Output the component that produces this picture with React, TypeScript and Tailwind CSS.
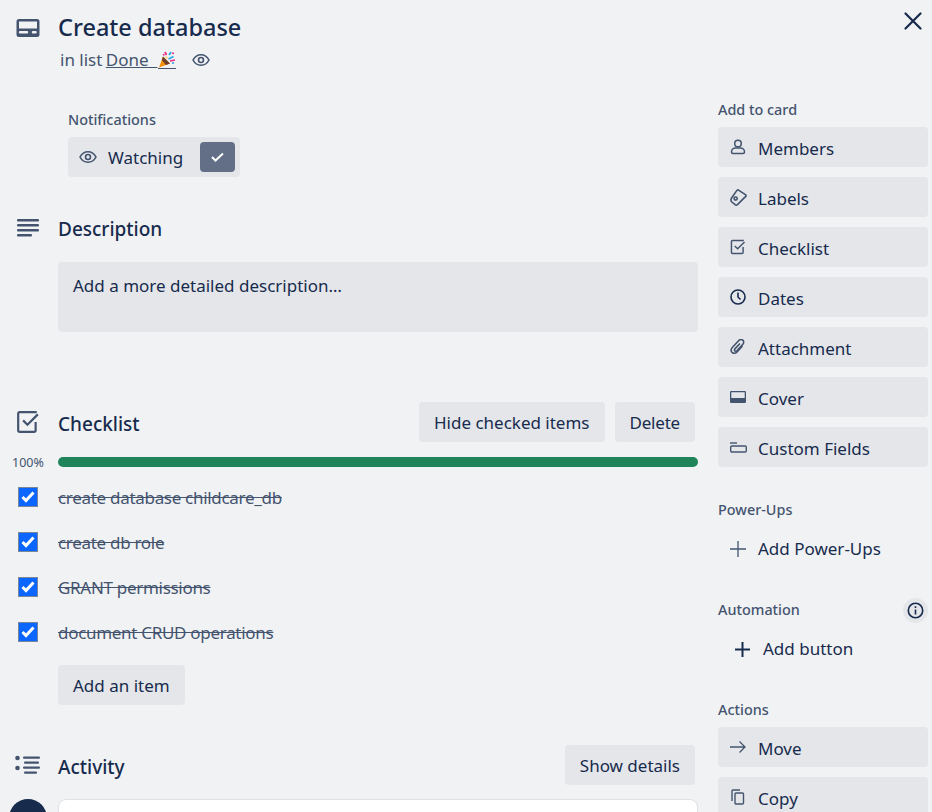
const font = { fontFamily: '"Noto Sans", sans-serif' };

function CardIcon() {
  return (
    <svg width="24" height="20" viewBox="0 0 24 20" fill="#44546f">
      <path fillRule="evenodd" d="M3 1h18a2.5 2.5 0 012.5 2.5v13A2.5 2.5 0 0121 19H3a2.5 2.5 0 01-2.5-2.5v-13A2.5 2.5 0 013 1zm0 2.5v7h18v-7H3zm1 9.5a1 1 0 000 2.5h7a1 1 0 000-2.5H4zm13 0a1.2 1.2 0 000 2.5h2.5a1.2 1.2 0 000-2.5H17z" />
    </svg>
  );
}

function EyeIcon() {
  return (
    <svg width="18" height="14" viewBox="0 0 18 14" fill="none" stroke="#44546f" strokeWidth="1.6">
      <path d="M1 7c1.8-3.4 4.6-5.3 8-5.3S15.200 3.600 17 7c-1.800 3.400-4.600 5.300-8 5.300S2.800 10.400 1 7z" />
      <circle cx="9" cy="7" r="2.500" />
    </svg>
  );
}

function PartyIcon() {
  return (
    <svg width="18" height="17" viewBox="0 0 18 17">
      <path d="M5 5.500L1 16.500l11-4z" fill="#f4900c" />
      <path d="M5 5.500l7 7-4 1.400L3.800 9z" fill="#6b3f2a" />
      <path d="M7 1l1.500 3M5.500 3l.5 1.500" stroke="#ea2f86" strokeWidth="1.800" />
      <path d="M11 4l2-3M10.500 8l5-2.500" stroke="#2aa8e8" strokeWidth="1.800" />
      <path d="M12 10l5-1M14 2l2 .5" stroke="#ea2f86" strokeWidth="1.500" />
      <circle cx="15" cy="12" r="1.100" fill="#2aa8e8" />
      <circle cx="8.500" cy="6.500" r="1.100" fill="#fdcb58" />
    </svg>
  );
}

function DescIcon() {
  return (
    <svg width="24" height="20" viewBox="0 0 24 20" fill="#44546f">
      <rect x="1" y="0" width="22" height="2.500" rx="1" />
      <rect x="1" y="5" width="22" height="2.500" rx="1" />
      <rect x="1" y="10" width="22" height="2.500" rx="1" />
      <rect x="1" y="15" width="15" height="2.500" rx="1" />
    </svg>
  );
}

function ChecklistIcon({ size = 24 }: { size?: number }) {
  return (
    <svg width={size} height={size} viewBox="0 0 22 22" fill="none" stroke="#44546f" strokeWidth="2">
      <path d="M18 11v7.500a1.500 1.500 0 01-1.500 1.500h-13A1.500 1.500 0 012 18.500v-15A1.500 1.500 0 013.500 2H19" />
      <path d="M6.500 9.500l4 4L20 4" />
    </svg>
  );
}

function ActivityIcon() {
  return (
    <svg className="-ml-[1px]" width="26" height="20" viewBox="0 0 26 20" fill="#44546f">
      <circle cx="2.500" cy="3" r="2.300" />
      <circle cx="2.500" cy="13" r="2.300" />
      <rect x="8" y="1.500" width="17" height="2.200" rx="1" />
      <rect x="9" y="6.500" width="15" height="2.200" rx="1" />
      <rect x="8" y="11.500" width="17" height="2.200" rx="1" />
      <rect x="9" y="16.500" width="13" height="2.200" rx="1" />
    </svg>
  );
}

const sideIcons: Record<string, React.ReactNode> = {
  Members: (
    <svg width="16" height="16" viewBox="0 0 16 16" fill="none" stroke="#44546f" strokeWidth="1.500">
      <circle cx="8" cy="4.500" r="3.300" />
      <path d="M1.500 13c0-2.500 2-4 4-4h5c2 0 4 1.500 4 4 0 1-.5 1.500-1.500 1.500H3c-1 0-1.500-.5-1.500-1.500z" />
    </svg>
  ),
  Labels: (
    <svg width="17" height="17" viewBox="0 0 16 16" fill="none" stroke="#44546f" strokeWidth="1.500" strokeLinejoin="round">
      <path d="M8 1l6.500 4.300q1 .8.300 1.700L7 14.700q-1 .8-2.200.1L1.500 12q-1.200-1.500 0-3.500L6 2q1-1.500 2-1z" />
      <circle cx="5.300" cy="9" r="1.500" />
    </svg>
  ),
  Checklist: <ChecklistIcon size={16} />,
  Dates: (
    <svg width="16" height="16" viewBox="0 0 16 16" fill="none" stroke="#172b4d" strokeWidth="1.600">
      <circle cx="8" cy="8" r="7" />
      <path d="M8 3.500V8l2.500 2.500" />
    </svg>
  ),
  Attachment: (
    <svg width="16" height="16" viewBox="0 0 16 16" fill="none" stroke="#44546f" strokeWidth="1.600">
      <path d="M12.500 7l-5.500 6c-1.500 1.500-3.500 1.500-5 .3-1.200-1.300-1-3.300.3-4.800l6.500-7c1-1.100 2.800-1.300 4-.3 1.100 1 1.200 2.800.1 4l-6 6.500c-.6.600-1.400.7-2 .2-.6-.6-.5-1.400 0-2L10 4.500" />
    </svg>
  ),
  Cover: (
    <svg width="16" height="14" viewBox="0 0 16 14" fill="#44546f">
      <path fillRule="evenodd" d="M1.500 1h13A1.300 1.300 0 0116 2.300v9.400a1.300 1.300 0 01-1.300 1.300H1.300A1.300 1.300 0 010 11.700V2.300A1.300 1.300 0 011.500 1zm-.2 1.300v5.700h13.400V2.300H1.300z" />
    </svg>
  ),
  "Custom Fields": (
    <svg width="17" height="11" viewBox="0 0 17 11" fill="none" stroke="#44546f" strokeWidth="1.400">
      <path d="M0 1h7" />
      <rect x=".7" y="4" width="15.600" height="6" rx="1.200" />
    </svg>
  ),
  Move: (
    <svg width="16" height="14" viewBox="0 0 16 14" fill="none" stroke="#44546f" strokeWidth="1.300">
      <path d="M0 7h15M9.500 1.500L15 7l-5.500 5.500" />
    </svg>
  ),
  Copy: (
    <svg width="14" height="16" viewBox="0 0 14 16" fill="none" stroke="#44546f" strokeWidth="1.400">
      <path d="M1 12V2a1 1 0 011-1h7" />
      <rect x="4" y="4" width="8.500" height="11" rx="1" />
    </svg>
  ),
};

function SideButton({ label }: { label: string }) {
  return (
    <div className="flex h-10 items-center rounded-[4px] bg-[#e4e6ea] text-[17px] text-[#172b4d]">
      <span className="flex w-10 shrink-0 items-center justify-center">{sideIcons[label]}</span>
      <span className="pt-[3px]">{label}</span>
    </div>
  );
}

function SideLabel({ children }: { children: React.ReactNode }) {
  return <div className="flex h-5 items-center text-[14.400px] font-medium text-[#44546f]">{children}</div>;
}

function SectionTitle({ icon, title, right, drop }: { icon: React.ReactNode; title: string; right?: React.ReactNode; drop?: boolean }) {
  return (
    <div className="flex h-10 items-center">
      <span className="flex w-[58px] shrink-0 items-center pl-4">{icon}</span>
      <h3 className={drop ? "flex-1 pt-[4px] text-[19px] font-medium text-[#172b4d]" : "flex-1 text-[19px] font-medium text-[#172b4d]"}>{title}</h3>
      {right}
    </div>
  );
}

function Btn({ children }: { children: React.ReactNode }) {
  return (
    <div className="flex h-10 items-center rounded-[4px] bg-[#e4e6ea] px-[15px] pt-[2px] text-[17px] text-[#172b4d]">
      {children}
    </div>
  );
}

function CheckItem({ text }: { text: string }) {
  return (
    <div className="flex h-[45px] items-center">
      <span className="ml-[18px] -mt-[3px] flex h-5 w-5 items-center justify-center border border-[#7a869a] bg-[#0b66ff]">
        <svg width="14" height="12" viewBox="0 0 14 12" fill="none" stroke="#fff" strokeWidth="3">
          <path d="M1.500 6l3.500 3.500L12.500 1.500" />
        </svg>
      </span>
      <span className="ml-5 pb-[1px] text-[17px] tracking-[-0.3px] text-[#44546f] line-through">{text}</span>
    </div>
  );
}

export default function App() {
  return (
    <div className="flex h-[812px] w-[932px] overflow-hidden bg-[#f1f2f4]" style={font}>
      <main className="w-[698px] shrink-0">
        <div className="mt-2 flex h-10 items-center">
          <span className="flex w-[58px] shrink-0 pl-4">
            <CardIcon />
          </span>
          <h1 className="text-[23.500px] font-medium text-[#172b4d]">Create database</h1>
        </div>
        <div className="ml-[60px] flex h-6 items-center text-[17px] text-[#44546f]">
          <span>in list&nbsp;</span>
          <span className="-ml-[1px] flex items-center underline">
            Done&nbsp;&nbsp;
            <span className="ml-[1px] border-b border-[#44546f]"><PartyIcon /></span>
          </span>
          <span className="ml-[16px]"><EyeIcon /></span>
        </div>

        <div className="mt-[38px] ml-[68px]">
          <div className="flex h-5 items-center text-[14.400px] font-medium text-[#44546f]">Notifications</div>
          <div className="mt-[7px] flex h-10 w-[172px] items-center rounded-[4px] bg-[#e4e6ea] text-[17px] text-[#172b4d]">
            <span className="ml-[11px]"><EyeIcon /></span>
            <span className="ml-[11px] pt-[2px]">Watching</span>
            <span className="ml-auto mr-[5px] flex h-[30px] w-[35px] items-center justify-center rounded-[4px] bg-[#626f86]">
              <svg width="13" height="10" viewBox="0 0 13 10" fill="none" stroke="#fff" strokeWidth="2">
                <path d="M1 5l3.500 3.500L12 1.500" />
              </svg>
            </span>
          </div>
        </div>

        <div className="mt-[32px]">
          <SectionTitle icon={<DescIcon />} title="Description" />
        </div>
        <div className="ml-[58px] mt-[13px] h-[70px] rounded-[4px] bg-[#e4e6ea] px-[15px] py-[10px] text-[17px] leading-[28px] text-[#172b4d]">
          Add a more detailed description…
        </div>

        <div className="mt-[70px]">
          <SectionTitle
            drop
            icon={<ChecklistIcon />}
            title="Checklist"
            right={
              <div className="mr-[3px] flex gap-[10px]">
                <Btn>Hide checked items</Btn>
                <Btn><span className="tracking-[-0.2px]">Delete</span></Btn>
              </div>
            }
          />
        </div>
        <div className="mt-[15px] flex h-[10px] items-center">
          <span className="flex w-[58px] shrink-0 pl-3 pt-[2px] text-[12.500px] text-[#44546f]">100%</span>
          <div className="h-[10px] flex-1 rounded-[5px] bg-[#1f845a]" />
        </div>
        <div className="mt-[9px]">
          <CheckItem text="create database childcare_db" />
          <CheckItem text="create db role" />
          <CheckItem text="GRANT permissions" />
          <CheckItem text="document CRUD operations" />
        </div>
        <div className="ml-[58px] mt-[9px] flex">
          <Btn>Add an item</Btn>
        </div>

        <div className="mt-10">
          <SectionTitle drop icon={<ActivityIcon />} title="Activity" right={<div className="mr-[3px]"><Btn>Show details</Btn></div>} />
        </div>
        <div className="mt-[14px] flex">
          <span className="ml-[9px] h-[38px] w-[38px] shrink-0 rounded-full bg-[#172b4d]" />
          <div className="ml-[11px] h-10 flex-1 rounded-[8px] border border-[#dfe1e6] bg-white" />
        </div>
      </main>

      <aside className="ml-5 mt-[100px] w-[210px] shrink-0">
        <SideLabel>Add to card</SideLabel>
        <div className="mt-[7px] flex flex-col gap-[10px]">
          {["Members", "Labels", "Checklist", "Dates", "Attachment", "Cover", "Custom Fields"].map((l) => (
            <SideButton key={l} label={l} />
          ))}
        </div>

        <div className="mt-[33px]"><SideLabel>Power-Ups</SideLabel></div>
        <div className="mt-[9px] flex h-10 items-center text-[17px] text-[#172b4d]">
          <span className="flex w-10 shrink-0 items-center justify-center">
            <svg width="16" height="16" viewBox="0 0 16 16" stroke="#44546f" strokeWidth="1.300"><path d="M8 0v16M0 8h16" /></svg>
          </span>
          Add Power-Ups
        </div>

        <div className="mt-[31px] flex h-5 items-center justify-between">
          <span className="text-[14.400px] font-medium text-[#44546f]">Automation</span>
          <span className="flex h-[25px] w-[25px] items-center justify-center rounded-full bg-[#e4e6ea]">
            <svg width="17" height="17" viewBox="0 0 17 17" fill="none" stroke="#172b4d" strokeWidth="1.600">
              <circle cx="8.500" cy="8.500" r="7.200" />
              <path d="M8.500 7.500v5M8.500 4.200v1.800" />
            </svg>
          </span>
        </div>
        <div className="mt-[9px] flex h-10 items-center pl-[45px] text-[17px] text-[#172b4d]">
          <svg className="mr-[13px] -ml-[28px]" width="15" height="15" viewBox="0 0 15 15" stroke="#172b4d" strokeWidth="2"><path d="M7.500 0v15M0 7.500h15" /></svg>
          Add button
        </div>

        <div className="mt-[31px]"><SideLabel>Actions</SideLabel></div>
        <div className="mt-[7px] flex flex-col gap-[10px]">
          <SideButton label="Move" />
          <SideButton label="Copy" />
        </div>
      </aside>

      <svg className="absolute left-[904px] top-[12px]" width="18" height="18" viewBox="0 0 18 18" stroke="#172b4d" strokeWidth="2.200" strokeLinecap="round">
        <path d="M1.500 1.500l15 15M16.500 1.500l-15 15" />
      </svg>
    </div>
  );
}
